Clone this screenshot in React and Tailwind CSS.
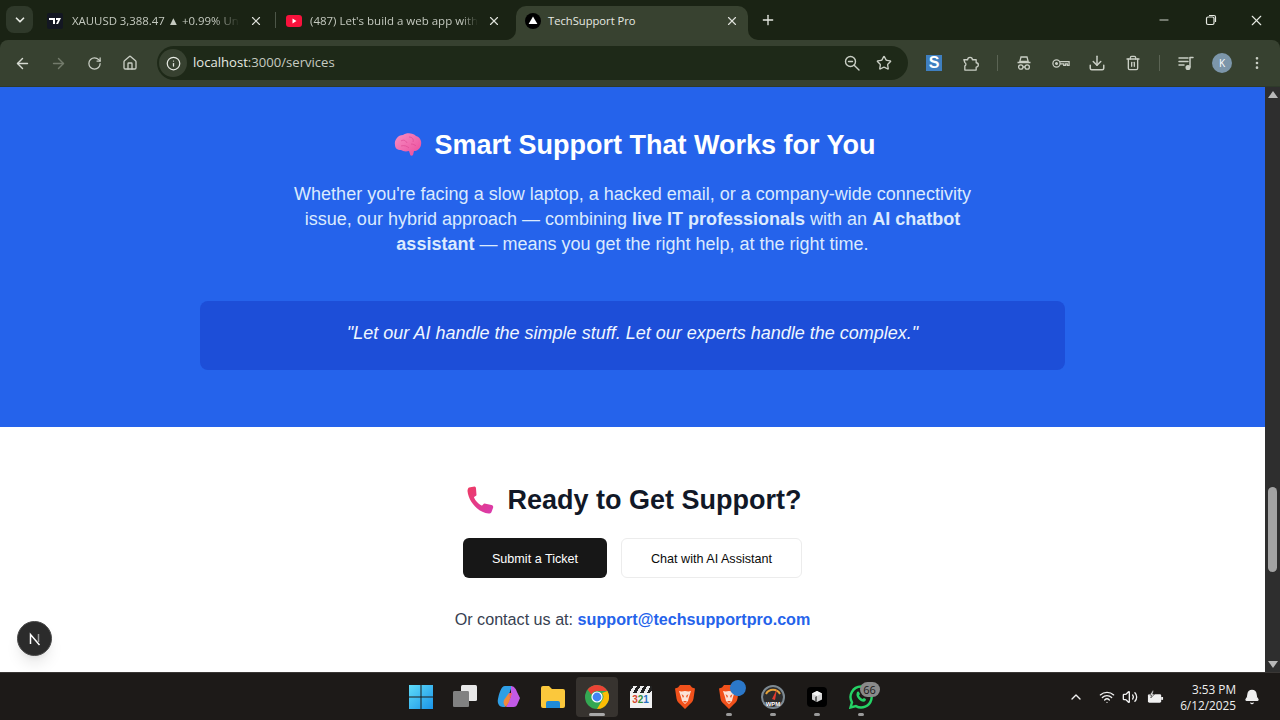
import {
  ArrowLeft, ArrowRight, RotateCw, Home, Info, Star, Download, Trash2,
  MoreVertical, ChevronDown, ChevronUp, X, Plus, Minus, Wifi, Volume2, Bell,
} from 'lucide-react';

const uiFont = "font-['Open_Sans','Noto_Sans',sans-serif]";

const TradingViewIcon = () => (
  <svg viewBox="0 0 16 16" className="w-4 h-4 shrink-0">
    <rect width="16" height="16" rx="2" fill="#131722" />
    <path d="M2 5h6v6H6V7H2z M9 5h5l-3 6H9l2-4H9z" fill="#fff" />
  </svg>
);

const YoutubeIcon = () => (
  <svg viewBox="0 0 16 12" className="w-4 h-3 shrink-0">
    <rect width="16" height="12" rx="3" fill="#f8123c" />
    <path d="M6.5 3.5 10.5 6l-4 2.5z" fill="#fff" />
  </svg>
);

const NextTabIcon = () => (
  <svg viewBox="0 0 16 16" className="w-4 h-4 shrink-0">
    <circle cx="8" cy="8" r="8" fill="#000" />
    <path d="M8 3.6 12.4 11H3.6z" fill="#fff" />
  </svg>
);

const TabBar = () => (
  <div className="h-10 bg-[#1a2314] flex items-start pt-[6px] pl-[6px] shrink-0">
    <div className="w-[27px] h-[27px] rounded-lg bg-[#2f392a] flex items-center justify-center">
      <ChevronDown size={14} strokeWidth={3} className="text-[#e6e9e2]" />
    </div>

    <div className="ml-[14px] w-[216px] h-[30px] flex items-center text-[#c4c9bf]">
      <TradingViewIcon />
      <span className="ml-[9px] w-[168px] text-[11.4px] whitespace-nowrap overflow-hidden [mask-image:linear-gradient(to_right,black_85%,transparent)]">
        XAUUSD 3,388.47 ▲ +0.99% Un
      </span>
      <X className="ml-auto text-[#dde0d9]" size={14} strokeWidth={2} />
    </div>
    <div className="ml-[12px] mt-[6px] w-px h-4 bg-[#4d5648]" />

    <div className="ml-[10px] w-[215px] h-[30px] flex items-center text-[#c4c9bf]">
      <YoutubeIcon />
      <span className="ml-[8px] w-[168px] text-[11.5px] whitespace-nowrap overflow-hidden [mask-image:linear-gradient(to_right,black_90%,transparent)]">
        (487) Let's build a web app with
      </span>
      <X className="ml-auto text-[#dde0d9]" size={14} strokeWidth={2} />
    </div>

    <div className="relative ml-[15px] w-[232px] h-[34px] bg-[#384230] rounded-t-[10px] px-[9px] text-[#e6e9e2]">
      {/* inverted corners where the tab meets the toolbar */}
      <div className="absolute -left-[10px] bottom-0 w-[10px] h-[10px] bg-[#384230]">
        <div className="w-full h-full bg-[#1a2314] rounded-br-[10px]" />
      </div>
      <div className="absolute -right-[10px] bottom-0 w-[10px] h-[10px] bg-[#384230]">
        <div className="w-full h-full bg-[#1a2314] rounded-bl-[10px]" />
      </div>
      <div className="h-[30px] flex items-center">
        <NextTabIcon />
        <span className="ml-[7px] text-[11.2px] whitespace-nowrap">TechSupport Pro</span>
        <X className="ml-auto text-[#dde0d9]" size={14} strokeWidth={2} />
      </div>
    </div>

    <Plus size={16} strokeWidth={2} className="ml-[12px] mt-[6px] text-[#e6e9e2]" />
    <div className="ml-auto flex items-center h-7 text-[#e6e9e2]">
      <Minus size={14} strokeWidth={1.5} className="mr-[34px]" />
      <svg viewBox="0 0 12 12" className="w-3 h-3 mr-[31px]" fill="none" stroke="currentColor" strokeWidth="1.2">
        <rect x="1.5" y="3" width="7.5" height="7.5" rx="1.5" />
        <path d="M4 1.5h5a1.5 1.5 0 0 1 1.5 1.5v5" />
      </svg>
      <X size={17} strokeWidth={1.6} className="mr-[15px]" />
    </div>
  </div>
);

const Toolbar = () => (
  <div className="bg-[#1a2314] shrink-0">
    <div className="h-[47px] bg-[#374130] rounded-t-lg flex items-center border-b border-[#2e3a2a] text-[#c9cec4]">
      <ArrowLeft size={17} className="ml-[14px] text-[#d6dad1]" />
      <ArrowRight size={17} className="ml-[19px] text-[#737b6b]" />
      <RotateCw size={15} className="ml-[20px]" />
      <Home size={16} className="ml-[20px]" />
      <div className="ml-[19px] w-[751px] h-[34px] rounded-full bg-[#1e2918] flex items-center pl-[2px] pr-[16px]">
        <div className="w-7 h-7 rounded-full bg-[#374130] flex items-center justify-center">
          <Info size={15} className="text-[#e6e9e2]" />
        </div>
        <span className="ml-[6px] text-[13.1px] text-[#e6e9e2]">
          localhost<span className="text-[#c6cbc1]">:3000/services</span>
        </span>
        <svg viewBox="0 0 16 16" className="ml-auto mr-[16px] w-4 h-4" fill="none" stroke="currentColor" strokeWidth="1.4" strokeLinecap="round">
          <circle cx="6.5" cy="6.5" r="5" />
          <path d="M4.5 6.5h4M10.2 10.2l4.800 4.800" />
        </svg>
        <Star size={16} strokeWidth={2} />
      </div>
      <div className="ml-[18px] w-4 h-4 bg-[#3f7fc0] text-white font-bold text-[16px] leading-none flex items-center justify-center font-['Liberation_Sans',sans-serif]">S</div>
      <svg viewBox="0 0 18 18" className="ml-[20px] w-[17px] h-[17px]" fill="none" stroke="currentColor" strokeWidth="1.400" strokeLinejoin="round">
        <path d="M2 5h4a2.500 2.500 0 0 1 5 0h4v3.200a2.300 2.300 0 0 1 0 4.600V16H3v-4.500c1.500-.5 1.500-3 0-3.500z" />
      </svg>
      <div className="ml-[18px] w-px h-4 bg-[#5b6454]" />
      <svg viewBox="0 0 16 16" className="ml-[18px] w-4 h-4" fill="none" stroke="currentColor" strokeWidth="1.3">
        <path d="M5 2h6l1.2 4.500H3.800zM1.500 7.500h13" />
        <circle cx="4.800" cy="12" r="2.200" />
        <circle cx="11.200" cy="12" r="2.200" />
        <path d="M7 12h2" />
      </svg>
      <svg viewBox="0 0 20 12" className="ml-[20px] w-[18px] h-[11px]" fill="none" stroke="currentColor" strokeWidth="1.4">
        <circle cx="5" cy="6" r="4" />
        <circle cx="5" cy="6" r="1" fill="currentColor" />
        <path d="M9 4h10v4h-2V6.500h-2V8h-2V6.500H9" />
      </svg>
      <Download size={18} className="ml-[18px]" />
      <Trash2 size={16} className="ml-[19px]" />
      <div className="ml-[18px] w-px h-4 bg-[#5b6454]" />
      <svg viewBox="0 0 16 16" className="ml-[18px] w-4 h-4" fill="none" stroke="currentColor" strokeWidth="1.500" strokeLinecap="round">
        <path d="M1 3h9M1 6.500h9M1 10h5" />
        <path d="M12 3v9" />
        <path d="M12 2.500h3" />
        <circle cx="10" cy="12.500" r="1.800" fill="currentColor" />
      </svg>
      <div className="ml-[18px] w-5 h-5 rounded-full bg-[#7c96aa] text-white text-[10px] flex items-center justify-center">K</div>
      <MoreVertical size={16} className="ml-[17px]" />
    </div>
  </div>
);

const BrainEmoji = () => (
  <svg viewBox="0 0 30 26" className="w-[30px] h-[26px]">
    <defs>
      <linearGradient id="brain" x1="0" y1="0" x2="1" y2="1">
        <stop offset="0" stopColor="#f78fc4" />
        <stop offset="1" stopColor="#ec4a9a" />
      </linearGradient>
    </defs>
    <path
      d="M2 13C1 8 5 3 10 3c3-2.500 10-2.500 13 1 4 1 6 5 5 9-1 4-4 6-7 6l-1 4c-1 1-3 1-3-1l-1-3c-4 1-6 0-8-1-4 0-6-2-6-5z"
      fill="url(#brain)"
    />
    <path d="M8 9c3-2 5 0 6 2m2-6c3 0 5 2 4 5m-12 4c3-1 6 0 8 2m2-4c2 0 4 1 5 2" fill="none" stroke="#dc4a92" strokeWidth="0.7" />
  </svg>
);

const PhoneEmoji = () => (
  <svg viewBox="0 0 28 28" className="w-7 h-7">
    <defs>
      <linearGradient id="phone" x1="0" y1="0" x2="1" y2="1">
        <stop offset="0" stopColor="#ee3b63" />
        <stop offset="1" stopColor="#d93bb0" />
      </linearGradient>
    </defs>
    <path
      d="M2 1.500 7.500 0.500c1 0 1.500 1 1.500 2l.5 6.500c0 1-2.500 1.500-2.500 2.500 1.500 3.500 4 6 7.500 8 1 .5 2-2 3-2l7 1.500c1.500.5 2 1.500 1.500 3l-1.500 4c-.5 1-1.500 1.500-3 1.500C12 27 1.500 16 0.500 5c0-1.500.5-3 1.500-3.500z"
      fill="url(#phone)"
    />
  </svg>
);

const Page = () => (
  <div className="flex-1 min-w-0 bg-white font-['Liberation_Sans',Arial,sans-serif] overflow-hidden">
    <section className="h-[340px] bg-[#2563eb] flex flex-col items-center pt-[40px] text-white">
      <h2 className="flex items-center pl-[4px] text-[27px] leading-[36px] font-bold">
        <BrainEmoji />
        <span className="ml-[11px]">Smart Support That Works for You</span>
      </h2>
      <p className="mt-[19px] w-[720px] text-center text-[18px] leading-[25px] text-[#dbeafe]">
        Whether you're facing a slow laptop, a hacked email, or a company-wide connectivity issue, our hybrid approach — combining <strong>live IT professionals</strong> with an <strong>AI chatbot assistant</strong> — means you get the right help, at the right time.
      </p>
      <div className="mt-[44px] w-[865px] h-[69px] pb-1 rounded-lg bg-[#1d4ed8] flex items-center justify-center text-[18px] italic text-[#eff6ff]">
        "Let our AI handle the simple stuff. Let our experts handle the complex."
      </div>
    </section>
    <section className="flex flex-col items-center pt-[55px]">
      <h2 className="flex items-center pl-[4px] text-[27px] leading-[36px] font-bold text-[#111827]">
        <PhoneEmoji />
        <span className="ml-[12px]">Ready to Get Support?</span>
      </h2>
      <div className="mt-[20px] flex gap-[14px]">
        <button className="w-[144px] h-10 pt-[2px] rounded-md bg-[#171717] text-white text-[12.6px] font-medium">Submit a Ticket</button>
        <button className="w-[181px] h-10 pt-[2px] rounded-md bg-white border border-[#ececec] text-[#0a0a0a] text-[12.6px] font-medium">Chat with AI Assistant</button>
      </div>
      <p className="mt-[29px] text-[16.15px] leading-[24px] text-[#374151]">
        Or contact us at: <a className="font-bold text-[#2563eb]">support@techsupportpro.com</a>
      </p>
    </section>
  </div>
);

const Scrollbar = () => (
  <div className="w-[15px] shrink-0 bg-[#2e2e2e] flex flex-col items-center">
    <div className="mt-[4px] w-0 h-0 border-x-[5px] border-x-transparent border-b-[7px] border-b-[#b8b8b8]" />
    <div className="mt-[389px] w-[9px] h-[85px] rounded-full bg-[#a3a3a3]" />
    <div className="mt-[89px] w-0 h-0 border-x-[5px] border-x-transparent border-t-[7px] border-t-[#b8b8b8]" />
  </div>
);

const WinIcon = () => (
  <svg viewBox="0 0 24 24" className="w-6 h-6">
    <defs>
      <linearGradient id="win" x1="0" y1="0" x2="1" y2="1">
        <stop offset="0" stopColor="#5fdcf8" />
        <stop offset="1" stopColor="#1a94e8" />
      </linearGradient>
    </defs>
    <path d="M0 0h11.500v11.500H0zM12.500 0H24v11.500H12.500zM0 12.500h11.500V24H0zM12.500 12.500H24V24H12.500z" fill="url(#win)" />
  </svg>
);

const TaskViewIcon = () => (
  <svg viewBox="0 0 24 24" className="w-6 h-6">
    <rect x="8" y="0" width="16" height="16" rx="1.500" fill="#e8e8e8" />
    <rect x="0" y="6" width="16" height="16" rx="1.500" fill="#6f6f6f" />
    <rect x="0" y="6" width="16" height="16" rx="1.500" fill="#8d8d8d" opacity="0.6" />
  </svg>
);

const CopilotIcon = () => (
  <svg viewBox="0 0 24 24" className="w-6 h-6">
    <path d="M8 1h7l-4 11-3 10H6c-4 0-6-4-5-8 1-5 3-13 7-13z" fill="#2f9fe6" />
    <path d="M14 1c3 0 5 3 6 6l3 6-3 7c-1 2-3 2-5 2H9l5-11z" fill="#c25ae6" />
    <path d="M7 15l5-7h3l-3 9-3 5c-2-1-3-4-2-7z" fill="#f08a3c" />
    <path d="M12 8l3 0-2 6z" fill="#ee5a7e" />
  </svg>
);

const FolderIcon = () => (
  <svg viewBox="0 0 24 22" className="w-6 h-[22px]">
    <path d="M0 2a2 2 0 0 1 2-2h6l3 3h11a2 2 0 0 1 2 2v15a2 2 0 0 1-2 2H2a2 2 0 0 1-2-2z" fill="#fbc83c" />
    <path d="M7 15h10a2 2 0 0 1 2 2v5H5v-5a2 2 0 0 1 2-2z" fill="#1f8ad6" />
  </svg>
);

const ChromeIcon = () => (
  <svg viewBox="0 0 24 24" className="w-6 h-6">
    <circle cx="12" cy="12" r="12" fill="#34a853" />
    <path d="M12 0a12 12 0 0 1 10.400 6H12a6 6 0 0 0-5.600 3.800L2.600 4.600A12 12 0 0 1 12 0z" fill="#ea4335" />
    <path d="M22.400 6A12 12 0 0 1 12 24l5-8.500A6 6 0 0 0 17 8z" fill="#fbbc04" />
    <circle cx="12" cy="12" r="5.600" fill="#fff" />
    <circle cx="12" cy="12" r="4.400" fill="#4285f4" />
  </svg>
);

const MpcIcon = () => (
  <div className="w-[22px] h-[22px] flex flex-col">
    <div className="h-[7px] bg-[repeating-linear-gradient(120deg,#222_0,#222_3px,#eee_3px,#eee_6px)]" />
    <div className="flex-1 bg-[#f2f2f2] flex items-center justify-center text-[10px] leading-none font-bold font-['Liberation_Sans',sans-serif]">
      <span className="text-[#d9462f]">3</span>
      <span className="text-[#2f8f3c]">2</span>
      <span className="text-[#2b6fc4]">1</span>
    </div>
  </div>
);

const BraveIcon = () => (
  <svg viewBox="0 0 20 24" className="w-5 h-6">
    <path d="M5 0h10l2 2.500 3 1-1.500 10c-.5 3-2 4.500-4 6L10 24l-4.500-4.500c-2-1.500-3.500-3-4-6L0 3.500l3-1z" fill="#f1511b" />
    <path d="M4 6c3 1 4 0 6 0s3 1 6 0l-2 6-1 4-3 3-3-3-1-4z" fill="#fbe3d8" />
    <path d="M6.500 9 9 11l-1 2zM13.500 9 11 11l1 2zM8 16h4l-2 2z" fill="#f1511b" />
  </svg>
);

const WpmIcon = () => (
  <svg viewBox="0 0 24 24" className="w-6 h-6">
    <circle cx="12" cy="12" r="11" fill="#2d2d2d" stroke="#7d8a93" strokeWidth="2" />
    <path d="M5 9a8 8 0 0 1 14 0" stroke="#e4a23a" strokeWidth="2" fill="none" />
    <path d="M11 14 16 4l-2 11z" fill="#e33b2e" />
    <text x="12" y="21" textAnchor="middle" fontSize="6" fontWeight="700" fill="#fff" fontFamily="Liberation Sans">WPM</text>
  </svg>
);

const BoxAppIcon = () => (
  <div className="w-5 h-5 rounded bg-black flex items-center justify-center">
    <svg viewBox="0 0 12 12" className="w-3 h-3">
      <path d="M6 0l5 2.500v6L6 11 1 8.500v-6z" fill="#d4d4d4" />
      <path d="M6 5 1 2.500 6 0l5 2.500z" fill="#f5f5f5" />
      <path d="M6 5v6L4 10V6z" fill="#666" />
    </svg>
  </div>
);

const WhatsappIcon = () => (
  <svg viewBox="0 0 24 24" className="w-6 h-6" fill="none">
    <path d="M12 1.500a10.500 10.500 0 0 0-9 15.800L1.500 22.500l5.400-1.400A10.500 10.500 0 1 0 12 1.500z" stroke="#25d366" strokeWidth="2.400" />
    <path d="M8 7c1-1 2-.5 2.500 1l.5 1-1 1.500c.7 1.500 2 2.800 3.500 3.500l1.500-1 1.800 1c.5 1.500-.5 2.500-2.300 2.800C11 16.500 7 12 7.500 9z" fill="#25d366" />
  </svg>
);

const apps = [
  { icon: <WinIcon /> },
  { icon: <TaskViewIcon /> },
  { icon: <CopilotIcon /> },
  { icon: <FolderIcon /> },
  { icon: <ChromeIcon />, active: true },
  { icon: <MpcIcon /> },
  { icon: <BraveIcon /> },
  { icon: <BraveIcon />, dot: true, extra: true },
  { icon: <WpmIcon />, dot: true },
  { icon: <BoxAppIcon />, dot: true },
  { icon: <WhatsappIcon />, dot: true, badge: '66' },
];

const Taskbar = () => (
  <div className="h-12 bg-[#1d1a18] border-t border-[#3a3735] flex items-center shrink-0 text-[#f0f0f0]">
    <div className="flex-1" />
    <div className="flex pl-px">
      {apps.map((app, i) => (
        <div key={i} className="relative w-[44px] h-[40px] flex items-center justify-center">
          {app.active && <div className="absolute inset-y-0 inset-x-[1px] rounded bg-[#37332f]" />}
          <div className="relative flex">{app.icon}</div>
          {app.extra && <div className="absolute top-[3px] right-[5px] w-[16px] h-[16px] rounded-full bg-[#2b78c9] rotate-[-20deg]" />}
          {app.badge && (
            <span className="absolute top-[5px] right-[3px] w-[20px] h-[15px] rounded-full bg-[#8a8a8a] text-[11px] leading-[15px] text-center text-[#1a1a1a]">
              {app.badge}
            </span>
          )}
          {app.active && <div className="absolute bottom-[1px] left-[14px] w-4 h-[3px] rounded-full bg-[#a9a9a9]" />}
          {app.dot && <div className="absolute bottom-[1px] left-[19px] w-[6px] h-[3px] rounded-full bg-[#9a9a9a]" />}
        </div>
      ))}
    </div>
    <div className="flex-1 flex items-center justify-end">
      <ChevronUp size={16} strokeWidth={2} />
      <Wifi size={16} className="ml-[15px]" />
      <Volume2 size={16} className="ml-[7px]" />
      <svg viewBox="0 0 18 14" className="ml-[9px] w-[17px] h-[14px]">
        <rect x="1" y="4" width="14" height="9" rx="1.500" fill="#f0f0f0" />
        <rect x="15" y="7" width="2" height="3" fill="#f0f0f0" />
        <path d="M6 0 3 5h2L4 8l4-4H6l1-4z" fill="#f0f0f0" stroke="#1d1a18" strokeWidth="0.6" />
      </svg>
      <div className="ml-[16px] text-right text-[11.8px] leading-[16px]">
        <div>3:53 PM</div>
        <div>6/12/2025</div>
      </div>
      <Bell size={16} fill="currentColor" className="ml-[8px] mr-[20px]" />
    </div>
  </div>
);

export default function App() {
  return (
    <div className={`relative w-[1280px] h-[720px] flex flex-col overflow-hidden ${uiFont}`}>
      <TabBar />
      <Toolbar />
      <div className="flex-1 min-h-0 flex">
        <Page />
        <Scrollbar />
      </div>
      <Taskbar />
      {/* Next.js dev indicator */}
      <div className="absolute left-[17px] top-[621px] w-[35px] h-[35px] rounded-full bg-[#2b2b2b] border border-[#4b4b4b] shadow-lg flex items-center justify-center">
        <svg viewBox="0 0 14 14" className="w-[14px] h-[14px]" fill="none" strokeWidth="1.500">
          <path d="M2.500 12V2.500L11.500 13" stroke="#fff" />
          <path d="M10.500 2v8" stroke="#9a9a9a" />
        </svg>
      </div>
    </div>
  );
}
